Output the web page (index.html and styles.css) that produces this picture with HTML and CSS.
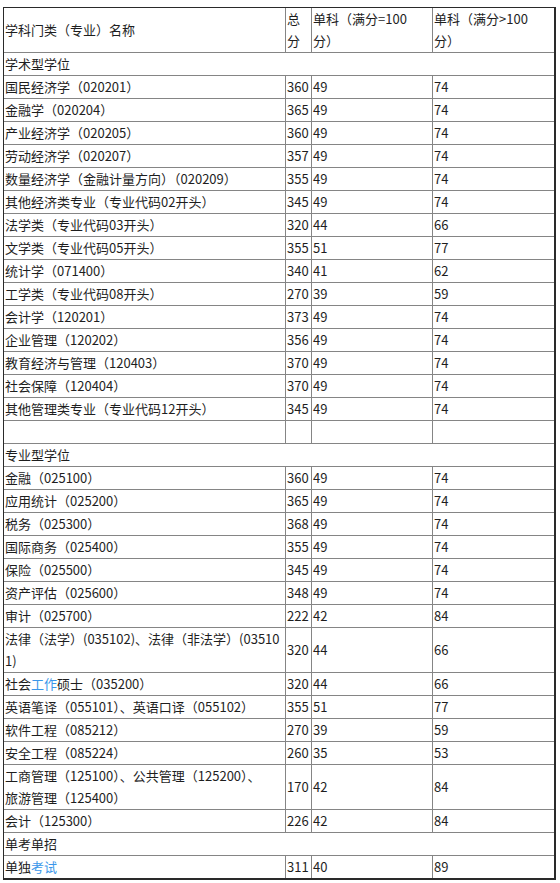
FILE: index.html
```html
<!DOCTYPE html>
<html lang="zh-CN">
<head>
<meta charset="utf-8">
<link rel="stylesheet" href="styles.css">
</head>
<body>
<table class="score">
<colgroup><col class="c1"><col class="c2"><col class="c3"><col class="c4"></colgroup>
<tr class="head"><td>学科门类（专业）名称</td><td>总分</td><td>单科（满分=100<br>分）</td><td>单科（满分&gt;100<br>分）</td></tr>
<tr><td colspan="4">学术型学位</td></tr>
<tr><td>国民经济学（020201）</td><td>360</td><td>49</td><td>74</td></tr>
<tr><td>金融学（020204）</td><td>365</td><td>49</td><td>74</td></tr>
<tr><td>产业经济学（020205）</td><td>360</td><td>49</td><td>74</td></tr>
<tr><td>劳动经济学（020207）</td><td>357</td><td>49</td><td>74</td></tr>
<tr><td>数量经济学（金融计量方向）（020209）</td><td>355</td><td>49</td><td>74</td></tr>
<tr><td>其他经济类专业（专业代码02开头）</td><td>345</td><td>49</td><td>74</td></tr>
<tr><td>法学类（专业代码03开头）</td><td>320</td><td>44</td><td>66</td></tr>
<tr><td>文学类（专业代码05开头）</td><td>355</td><td>51</td><td>77</td></tr>
<tr><td>统计学（071400）</td><td>340</td><td>41</td><td>62</td></tr>
<tr><td>工学类（专业代码08开头）</td><td>270</td><td>39</td><td>59</td></tr>
<tr><td>会计学（120201）</td><td>373</td><td>49</td><td>74</td></tr>
<tr><td>企业管理（120202）</td><td>356</td><td>49</td><td>74</td></tr>
<tr><td>教育经济与管理（120403）</td><td>370</td><td>49</td><td>74</td></tr>
<tr><td>社会保障（120404）</td><td>370</td><td>49</td><td>74</td></tr>
<tr><td>其他管理类专业（专业代码12开头）</td><td>345</td><td>49</td><td>74</td></tr>
<tr><td></td><td></td><td></td><td></td></tr>
<tr><td colspan="4">专业型学位</td></tr>
<tr><td>金融（025100）</td><td>360</td><td>49</td><td>74</td></tr>
<tr><td>应用统计（025200）</td><td>365</td><td>49</td><td>74</td></tr>
<tr><td>税务（025300）</td><td>368</td><td>49</td><td>74</td></tr>
<tr><td>国际商务（025400）</td><td>355</td><td>49</td><td>74</td></tr>
<tr><td>保险（025500）</td><td>345</td><td>49</td><td>74</td></tr>
<tr><td>资产评估（025600）</td><td>348</td><td>49</td><td>74</td></tr>
<tr><td>审计（025700）</td><td>222</td><td>42</td><td>84</td></tr>
<tr><td>法律（法学）(035102)、法律（非法学）(03510<br>1)</td><td>320</td><td>44</td><td>66</td></tr>
<tr><td>社会<a class="lnk">工作</a>硕士（035200）</td><td>320</td><td>44</td><td>66</td></tr>
<tr><td>英语笔译（055101）、英语口译（055102）</td><td>355</td><td>51</td><td>77</td></tr>
<tr><td>软件工程（085212）</td><td>270</td><td>39</td><td>59</td></tr>
<tr><td>安全工程（085224）</td><td>260</td><td>35</td><td>53</td></tr>
<tr><td>工商管理（125100）、公共管理（125200）、<br>旅游管理（125400）</td><td>170</td><td>42</td><td>84</td></tr>
<tr><td>会计（125300）</td><td>226</td><td>42</td><td>84</td></tr>
<tr><td colspan="4">单考单招</td></tr>
<tr><td>单独<a class="lnk">考试</a></td><td>311</td><td>40</td><td>89</td></tr>
</table>
</body>
</html>
```

FILE: styles.css
```css
html, body {
  margin: 0;
  padding: 0;
  background: #fff;
}
body {
  padding: 7px 0 0 3px;
  font-family: "Noto Sans CJK SC", "Noto Sans", sans-serif;
  font-size: 13px;
  color: #1e1e1e;
}
.score {
  border-collapse: separate;
  border-spacing: 0;
  table-layout: fixed;
  width: 553px;
  border-style: solid;
  border-color: #2a2a2a;
  border-width: 1px 2px 2px 1px;
}
.c1 { width: 282px; }
.c2 { width: 26px; }
.c3 { width: 121px; }
.c4 { width: 121px; }
.score td {
  border-right: 1px solid #858585;
  border-bottom: 1px solid #858585;
  padding: 0 0 0 1px;
  line-height: 22px;
  height: 22px;
  vertical-align: middle;
  text-align: left;
  overflow: hidden;
}
.score td:last-child {
  border-right: 0;
}
.score tr:last-child td {
  border-bottom: 0;
}
.lnk {
  color: #3a97ea;
  text-decoration: none;
}
```
